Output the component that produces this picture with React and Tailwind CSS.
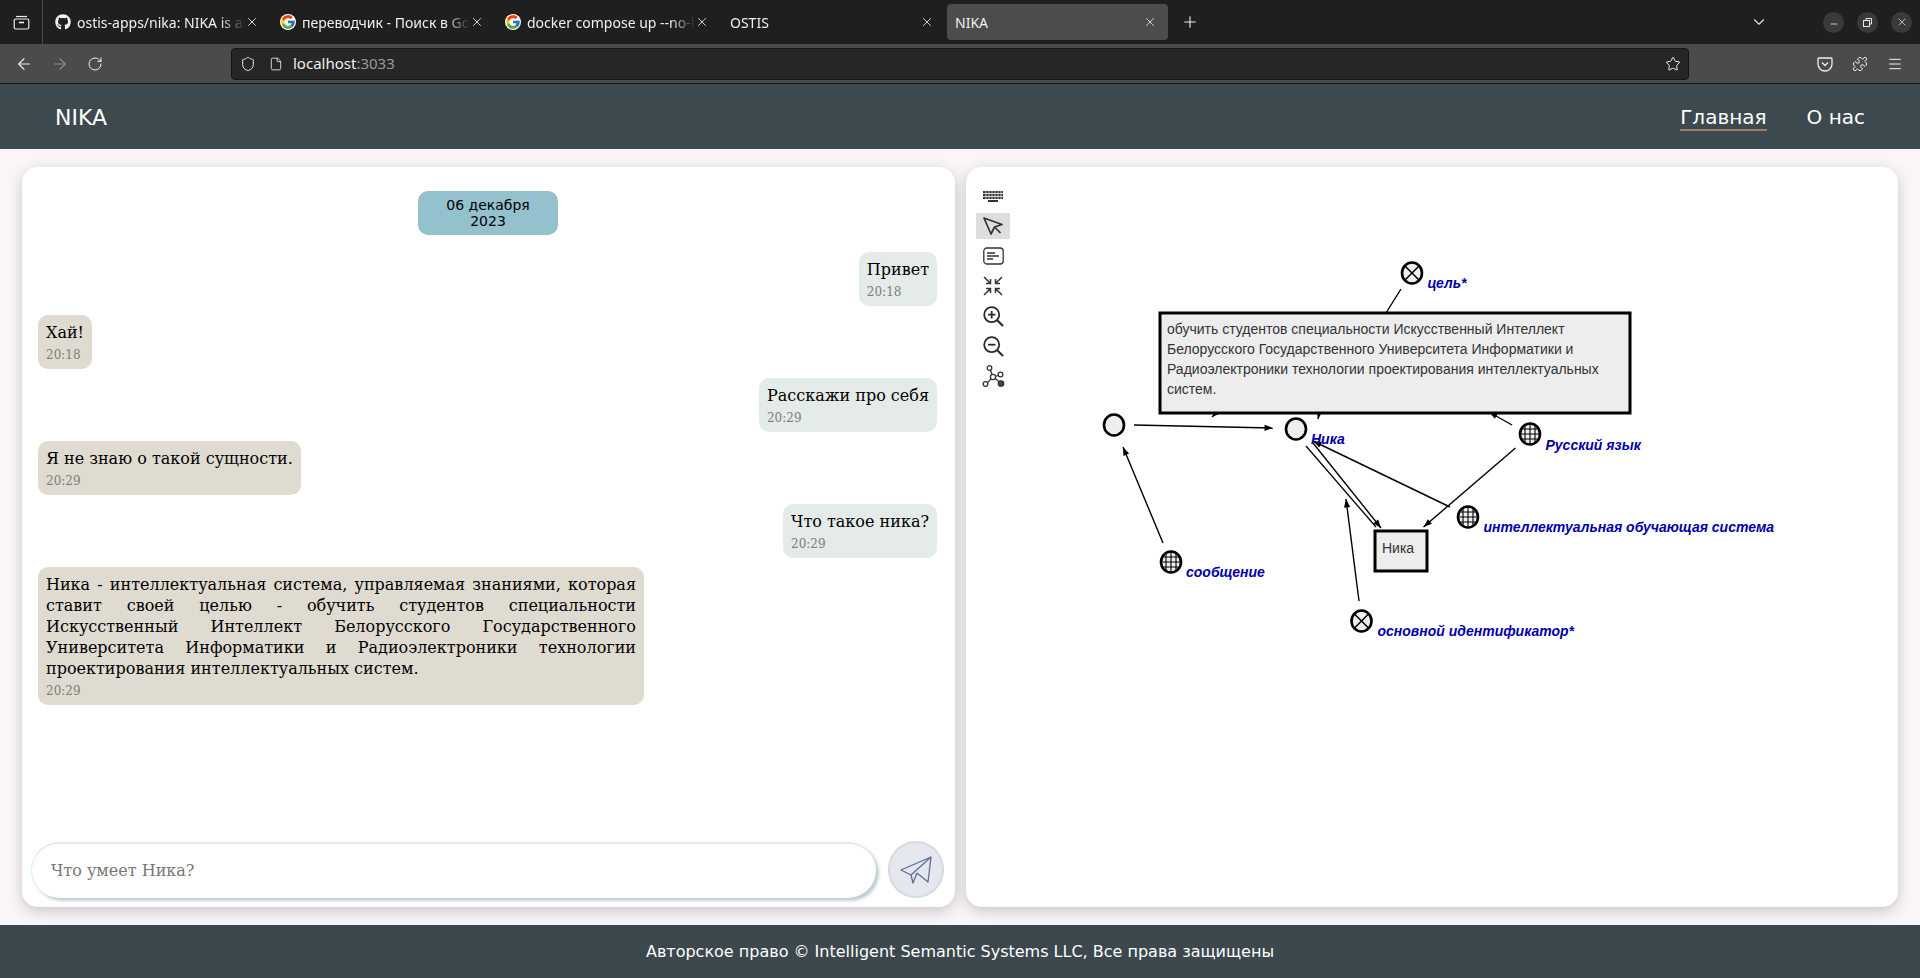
import React from 'react'
import { ArrowLeft, ArrowRight, RotateCw, Shield, File, Star, Puzzle, Menu, X, Plus, ChevronDown, Minus } from 'lucide-react'
import { FaGithub } from 'react-icons/fa'
import { FcGoogle } from 'react-icons/fc'

const tabs = [
    { title: 'ostis-apps/nika: NIKA is an intelligent', icon: 'github' },
    { title: 'переводчик - Поиск в Google', icon: 'google' },
    { title: 'docker compose up --no-build', icon: 'google' },
    { title: 'OSTIS' },
]

const messages = [
    { side: 'right', text: 'Привет', time: '20:18' },
    { side: 'left', text: 'Хай!', time: '20:18' },
    { side: 'right', text: 'Расскажи про себя', time: '20:29' },
    { side: 'left', text: 'Я не знаю о такой сущности.', time: '20:29' },
    { side: 'right', text: 'Что такое ника?', time: '20:29' },
    {
        side: 'left',
        text: 'Ника - интеллектуальная система, управляемая знаниями, которая ставит своей целью - обучить студентов специальности Искусственный Интеллект Белорусского Государственного Университета Информатики и Радиоэлектроники технологии проектирования интеллектуальных систем.',
        time: '20:29',
    },
]

const Tab = ({ title, icon }) => (
    <div className='w-[225px] h-full flex items-center shrink-0 pl-[12px] pr-[9px]'>
        {icon === 'github' && <FaGithub className='w-4 h-4 text-[#f2f2f2] shrink-0 mr-[6px]' />}
        {icon === 'google' && <FcGoogle className='w-4 h-4 shrink-0 mr-[6px] bg-white rounded-full' />}
        <span className="flex-1 overflow-hidden whitespace-nowrap text-[14px] text-[#f0f0f0] font-['Noto_Sans',sans-serif] [mask-image:linear-gradient(to_right,black_85%,transparent_100%)]">{title}</span>
        <X className='w-[14px] h-[14px] text-[#e8e8e8] shrink-0' strokeWidth={1.5} />
    </div>
)

const WindowButton = ({ children }) => (
    <div className='w-[21px] h-[21px] rounded-full bg-[#3a3a3a] flex items-center justify-center text-[#e8e8e8]'>{children}</div>
)

const Browser = () => (
    <>
        <div className='h-[44px] bg-[#1f1f1f] flex items-center shrink-0'>
            <div className='w-[43px] h-full flex items-center justify-center border-r border-[#4a4a4a] shrink-0'>
                <svg width='17' height='15' viewBox='0 0 17 15' fill='none' stroke='#eee' strokeWidth='1.2'>
                    <path d='M3 1.5h11' />
                    <rect x='1.2' y='4' width='14.6' height='10' rx='1.5' />
                    <path d='M6 7.5h5' strokeWidth='1.6' />
                </svg>
            </div>
            <div className='flex h-full'>
                {tabs.map((tab) => (
                    <Tab key={tab.title} title={tab.title} icon={tab.icon} />
                ))}
            </div>
            <div className='ml-[4px] w-[221px] h-[36px] bg-[#4c4c4c] rounded-[4px] flex items-center pl-[8px] pr-[11px] shrink-0'>
                <span className="flex-1 text-[14px] text-[#f0f0f0] font-['Noto_Sans',sans-serif]">NIKA</span>
                <X className='w-[14px] h-[14px] text-[#e8e8e8]' strokeWidth={1.5} />
            </div>
            <Plus className='w-[18px] h-[18px] text-[#f0f0f0] ml-[13px]' strokeWidth={1.5} />
            <ChevronDown className='w-[18px] h-[18px] text-[#e0e0e0] ml-[551px]' strokeWidth={1.5} />
            <div className='flex gap-[13px] ml-[55px]'>
                <WindowButton><Minus className='w-[10px] h-[10px] mt-[4px]' /></WindowButton>
                <WindowButton>
                    <svg width='9' height='9' viewBox='0 0 9 9' fill='none' stroke='currentColor'>
                        <rect x='0.5' y='2.5' width='6' height='6' />
                        <path d='M3 2.5V.5h5.5V6H6.5' />
                    </svg>
                </WindowButton>
                <WindowButton><X className='w-3 h-3' strokeWidth={1.5} /></WindowButton>
            </div>
        </div>
        <div className='h-[40px] bg-[#4b4b4b] border-b border-[#161616] flex items-center shrink-0'>
            <div className='flex items-center gap-[18px] pl-[15px] w-[231px]'>
                <ArrowLeft className='w-[18px] h-[18px] text-[#f0f0f0]' strokeWidth={1.5} />
                <ArrowRight className='w-[18px] h-[18px] text-[#8c8c8c]' strokeWidth={1.5} />
                <RotateCw className='w-4 h-4 text-[#f0f0f0]' strokeWidth={1.5} />
            </div>
            <div className='w-[1458px] h-[32px] bg-[#262626] border border-[#161616] rounded-[4px] flex items-center pl-[8px] pr-[7px]'>
                <Shield className='w-4 h-4 text-[#e8e8e8]' strokeWidth={1.5} />
                <File className='w-[14px] h-[14px] text-[#e8e8e8] ml-[13px]' strokeWidth={1.5} />
                <span className="ml-[10px] text-[15px] text-[#f0f0f0] font-['Noto_Sans',sans-serif]">localhost<span className='text-[#9a9a9a]'>:3033</span></span>
                <Star className='w-4 h-4 text-[#f0f0f0] ml-auto' strokeWidth={1.5} />
            </div>
            <div className='flex items-center gap-[19px] ml-[128px]'>
                <svg width='16' height='16' viewBox='0 0 16 16' fill='none' stroke='#eee' strokeWidth='1.3'>
                    <path d='M2 2h12a1 1 0 0 1 1 1v5a7 7 0 0 1-14 0V3a1 1 0 0 1 1-1z' />
                    <path d='M5 6.5l3 3 3-3' />
                </svg>
                <Puzzle className='w-4 h-4 text-[#f0f0f0]' strokeWidth={1.5} />
                <Menu className='w-4 h-4 text-[#f0f0f0]' strokeWidth={1.5} />
            </div>
        </div>
    </>
)

const Bubble = ({ side, text, time }) => (
    <div className={`flex mb-[9px] ${side === 'right' ? 'justify-end' : 'justify-start'}`}>
        <div className={`max-w-[606px] rounded-[10px] px-[8px] pt-[7px] pb-[6px] ${side === 'right' ? 'bg-[#e4ebe8]' : 'bg-[#e0dbd1]'}`}>
            <p className={`text-[16px] leading-[21px] text-black ${text.length > 100 ? 'text-justify' : ''}`}>{text}</p>
            <p className='text-[12px] leading-[16px] mt-[4px] text-[#7d7d78]'>{time}</p>
        </div>
    </div>
)

const Chat = () => (
    <div className="w-[933px] h-full bg-white rounded-[16px] shadow-[0_4px_14px_rgba(60,50,60,0.25)] flex flex-col pl-[16px] pr-[18px] font-['DejaVu_Serif',serif]">
        <div className='flex justify-center pt-[24px] mb-[17px]'>
            <div className="w-[140px] h-[44px] bg-[#93c1ce] rounded-[10px] text-center text-[14px] leading-[16px] pt-[6px] pl-[1px] text-black font-['DejaVu_Sans',sans-serif]">
                06 декабря
                <br />
                2023
            </div>
        </div>
        <div className='flex-1'>
            {messages.map((m, i) => (
                <Bubble key={i} side={m.side} text={m.text} time={m.time} />
            ))}
        </div>
        <div className='flex items-center justify-between pb-[9px] -mr-[7px] -ml-[7px]'>
            <input
                placeholder='Что умеет Ника?'
                className="w-[845px] h-[56px] rounded-[28px] bg-white pl-[19px] text-[16px] outline-none border-t-2 border-l border-[#e0ebeb] shadow-[3px_3px_3px_rgba(130,160,165,0.5)] placeholder:text-[#777] font-['DejaVu_Serif',serif]"
            />
            <div className='w-[56px] h-[57px] rounded-full bg-[#e6e6ee] border-2 border-[#d3dbe0] flex items-center justify-center'>
                <svg width='32' height='28' viewBox='0 0 32 28' fill='none' stroke='#5d6f96' strokeWidth='1.3' strokeLinejoin='round'>
                    <path d='M31 1L1 14l10 5 20-18zM31 1l-3 25-11-9M11 19l2 8 4-10' />
                </svg>
            </div>
        </div>
    </div>
)

const ToolIcon = ({ children, active }) => (
    <div className={`w-[34px] h-[26px] flex items-center justify-center ${active ? 'bg-[#dedede]' : ''}`}>{children}</div>
)

const Toolbar = () => (
    <div className='w-[34px] ml-[10px] pt-[16px] flex flex-col gap-[4px] shrink-0'>
        <ToolIcon>
            <svg width='20' height='11' viewBox='0 0 20 11' fill='#333'>
                <path d='M0 0h20v2.2H0zM0 3h20v2.2H0zM0 6h20v2H0z' />
                <path d='M5 9h10v2H5z' />
                <path d='M3 0v8M6 0v8M9 0v8M12 0v8M15 0v8M18 0v8' stroke='#fff' strokeWidth='.7' />
            </svg>
        </ToolIcon>
        <ToolIcon active>
            <svg width='20' height='18' viewBox='0 0 20 18' fill='none' stroke='#333' strokeWidth='1.7' strokeLinejoin='round'>
                <path d='M1 1l18 6.5-7.5 2.5L8 17z' />
                <path d='M11.5 10l6 6' />
            </svg>
        </ToolIcon>
        <ToolIcon>
            <svg width='21' height='18' viewBox='0 0 21 18' fill='none' stroke='#333' strokeWidth='1.3'>
                <rect x='.8' y='1' width='19.4' height='16' rx='3' />
                <path d='M4 6h8M4 9h12M4 12h6' />
            </svg>
        </ToolIcon>
        <ToolIcon>
            <svg width='20' height='20' viewBox='0 0 20 20' fill='none' stroke='#333' strokeWidth='1.5'>
                <path d='M1 1l6.5 6.5M3 7.5h4.5V3M19 1l-6.5 6.5M17 7.5h-4.5V3M1 19l6.5-6.5M3 12.5h4.5V17M19 19l-6.5-6.5M17 12.5h-4.5V17' />
            </svg>
        </ToolIcon>
        <ToolIcon>
            <svg width='21' height='21' viewBox='0 0 21 21' fill='none' stroke='#2b2b2b' strokeWidth='1.8'>
                <circle cx='8.7' cy='8.7' r='7.5' />
                <path d='M14 14l6 6' strokeWidth='2.1' />
                <path d='M5 8.7h7.4M8.7 5v7.4' />
            </svg>
        </ToolIcon>
        <ToolIcon>
            <svg width='21' height='21' viewBox='0 0 21 21' fill='none' stroke='#2b2b2b' strokeWidth='1.8'>
                <circle cx='8.7' cy='8.7' r='7.5' />
                <path d='M14 14l6 6' strokeWidth='2.1' />
                <path d='M5 8.7h7.4' />
            </svg>
        </ToolIcon>
        <ToolIcon>
            <svg width='23' height='22' viewBox='0 0 23 22' fill='none' stroke='#333' strokeWidth='1.3'>
                <path d='M8 4l3 8M11 12l7-2M11 12l-6 6M11 12l8 6' />
                <circle cx='7.5' cy='3' r='2.3' fill='#fff' />
                <circle cx='11' cy='12' r='2.6' fill='#fff' />
                <circle cx='18.5' cy='9.5' r='2.4' fill='#fff' />
                <circle cx='3.5' cy='19' r='2.4' fill='#fff' />
                <circle cx='19' cy='18.5' r='2.7' fill='#444' />
            </svg>
        </ToolIcon>
    </div>
)

// all coordinates below are page pixels, the viewBox takes care of the offset
const ArrowMarker = ({ x1, y1, x2, y2 }) => {
    const a = Math.atan2(y2 - y1, x2 - x1)
    const s = 9
    const p1 = `${x2 - s * Math.cos(a - 0.35)},${y2 - s * Math.sin(a - 0.35)}`
    const p2 = `${x2 - s * Math.cos(a + 0.35)},${y2 - s * Math.sin(a + 0.35)}`
    return (
        <g>
            <line x1={x1} y1={y1} x2={x2} y2={y2} stroke='#000' strokeWidth='1.4' />
            <polygon points={`${x2},${y2} ${p1} ${p2}`} fill='#000' />
        </g>
    )
}

const Node = ({ cx, cy, type }) => (
    <g stroke='#000'>
        <ellipse cx={cx} cy={cy} rx={10} ry={10.5} fill='#eee' strokeWidth='2.6' />
        {type === 'cross' && (
            <path d={`M${cx - 7} ${cy - 7}L${cx + 7} ${cy + 7}M${cx + 7} ${cy - 7}L${cx - 7} ${cy + 7}`} strokeWidth='1.5' />
        )}
        {type === 'grid' && (
            <path
                d={`M${cx - 5} ${cy - 8}V${cy + 8}M${cx + 5} ${cy - 8}V${cy + 8}M${cx} ${cy - 10}V${cy + 10}M${cx - 8} ${cy - 5}H${cx + 8}M${cx - 8} ${cy + 5}H${cx + 8}M${cx - 10} ${cy}H${cx + 10}`}
                strokeWidth='1.1'
            />
        )}
    </g>
)

const Label = ({ x, y, children }) => (
    <text x={x} y={y} fontFamily='Liberation Sans, sans-serif' fontSize='14' fontWeight='700' fontStyle='italic' fill='#0000a8'>{children}</text>
)

const Graph = () => (
    <svg className='flex-1 h-full' viewBox='1010 167 888 740'>
        <line x1='1401' y1='289' x2='1386' y2='313' stroke='#000' strokeWidth='1.4' />
        <ArrowMarker x1='1134' y1='425' x2='1273' y2='428' />
        <ArrowMarker x1='1163' y1='543' x2='1123' y2='447' />
        <ArrowMarker x1='1512' y1='425' x2='1489' y2='412' />
        <ArrowMarker x1='1230' y1='400' x2='1212' y2='417' />
        <ArrowMarker x1='1322' y1='400' x2='1318' y2='419' />
        <ArrowMarker x1='1450' y1='507' x2='1313' y2='441' />
        <ArrowMarker x1='1515.5' y1='448' x2='1423.5' y2='527' />
        <ArrowMarker x1='1359' y1='601' x2='1346' y2='499' />
        <line x1='1306' y1='446' x2='1376' y2='527' stroke='#000' strokeWidth='1.3' />
        <ArrowMarker x1='1313' y1='443' x2='1381' y2='528' />

        <rect x='1160' y='313' width='470' height='100' fill='#ededed' stroke='#000' strokeWidth='3' />
        <text fontFamily='Liberation Sans, sans-serif' fontSize='14' fill='#333'>
            <tspan x='1167' y='334'>обучить студентов специальности Искусственный Интеллект</tspan>
            <tspan x='1167' y='354'>Белорусского Государственного Университета Информатики и</tspan>
            <tspan x='1167' y='374'>Радиоэлектроники технологии проектирования интеллектуальных</tspan>
            <tspan x='1167' y='394'>систем.</tspan>
        </text>

        <rect x='1375' y='531' width='52' height='40' fill='#ededed' stroke='#000' strokeWidth='3' />
        <text x='1382' y='553' fontFamily='Liberation Sans, sans-serif' fontSize='14' fill='#333'>Ника</text>

        <Node cx={1412} cy={273} type='cross' />
        <Node cx={1114} cy={425} />
        <Node cx={1296} cy={429} />
        <Node cx={1530} cy={434} type='grid' />
        <Node cx={1468} cy={517} type='grid' />
        <Node cx={1171} cy={562} type='grid' />
        <Node cx={1361.5} cy={621} type='cross' />

        <Label x={1427.5} y={288}>цель*</Label>
        <Label x={1311} y={444}>Ника</Label>
        <Label x={1545.5} y={450}>Русский язык</Label>
        <Label x={1483.5} y={532}>интеллектуальная обучающая система</Label>
        <Label x={1186} y={577}>сообщение</Label>
        <Label x={1377.5} y={636}>основной идентификатор*</Label>
    </svg>
)

const App = () => {
    return (
        <div className='h-[978px] flex flex-col bg-[#faf6f8] overflow-hidden'>
            <Browser />
            <header className="h-[65px] bg-[#3c4a4f] flex items-center justify-between pl-[55px] pr-[55px] pt-[2px] shrink-0 text-white text-[20px] font-['DejaVu_Sans',sans-serif]">
                <span className='text-[22px]'>NIKA</span>
                <nav className='flex gap-[40px]'>
                    <a className='border-b-2 border-[#a07a6c] leading-[24px]'>Главная</a>
                    <a className='leading-[24px]'>О нас</a>
                </nav>
            </header>
            <main className='flex-1 flex gap-[11px] pl-[22px] pr-[22px] py-[18px] min-h-0'>
                <Chat />
                <div className='w-[932px] h-full bg-white rounded-[16px] shadow-[0_4px_14px_rgba(60,50,60,0.25)] flex'>
                    <Toolbar />
                    <Graph />
                </div>
            </main>
            <footer className="h-[53px] bg-[#3c484d] flex items-center justify-center shrink-0 text-white text-[16px] font-['DejaVu_Sans',sans-serif]">
                Авторское право © Intelligent Semantic Systems LLC, Все права защищены
            </footer>
        </div>
    )
}

export default App
